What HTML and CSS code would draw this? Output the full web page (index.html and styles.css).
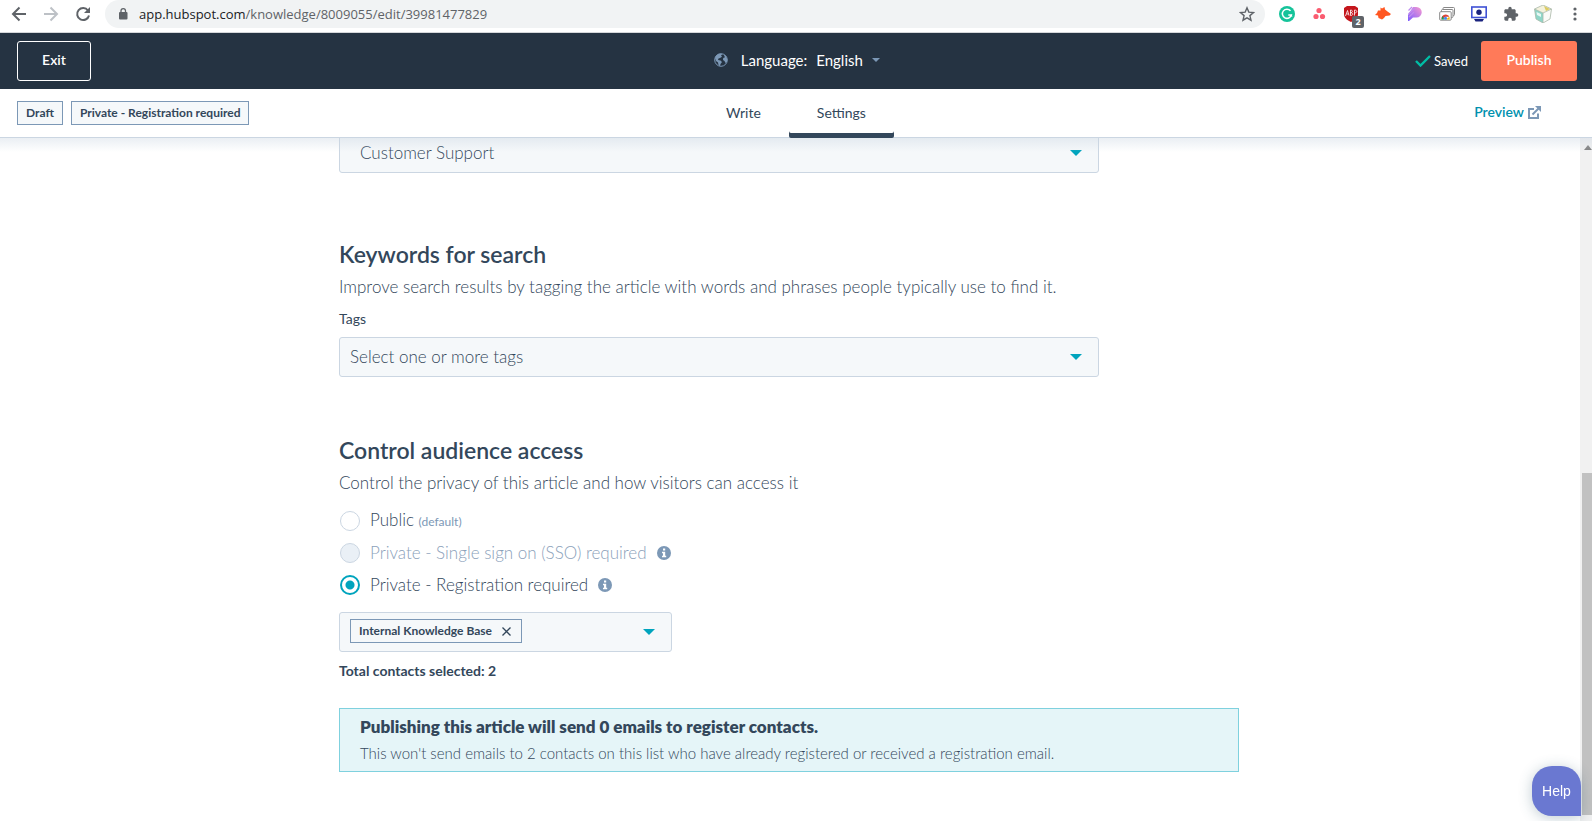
FILE: index.html
```html
<!DOCTYPE html>
<html lang="en">
<head>
<meta charset="utf-8">
<title>Article settings</title>
<link rel="stylesheet" href="styles.css">
</head>
<body>
<div class="browser">
  <button class="chrome-btn" aria-label="Back"><svg width="16" height="16" viewBox="0 0 16 16" fill="none" stroke="#5f6368" stroke-width="2"><path d="M15 8H2.500M8.500 1.500 2 8l6.500 6.500"/></svg></button>
  <button class="chrome-btn" aria-label="Forward"><svg width="16" height="16" viewBox="0 0 16 16" fill="none" stroke="#bdc1c6" stroke-width="2"><path d="M1 8h12.500M7.500 1.500 14 8l-6.500 6.500"/></svg></button>
  <button class="chrome-btn" aria-label="Reload"><svg width="16" height="16" viewBox="0 0 16 16"><path d="M13 4.500A6 6 0 1 0 14 9.500" fill="none" stroke="#5f6368" stroke-width="2"/><path d="M15 1v6H9z" fill="#5f6368"/></svg></button>
  <div class="omnibox">
    <svg width="10" height="14" viewBox="0 0 10 14"><rect x="1" y="5" width="8.500" height="7.500" rx="1" fill="#5f6368"/><path d="M3 5.500V3.800a2.200 2.200 0 0 1 4.500 0v1.700" fill="none" stroke="#5f6368" stroke-width="1.300"/></svg>
    <span class="url"><span class="host">app.hubspot.com</span>/knowledge/8009055/edit/39981477829</span>
    <button class="star" aria-label="Bookmark"><svg width="16" height="16" viewBox="0 0 16 16"><path d="m8 1.800 1.800 4.300 4.700.4-3.600 3.100 1.100 4.600L8 11.800l-4 2.400 1.100-4.600L1.500 6.500l4.700-.4z" fill="none" stroke="#5f6368" stroke-width="1.400"/></svg></button>
  </div>
  <div class="extensions">
    <button class="ext" aria-label="Grammar"><svg width="16" height="16" viewBox="0 0 16 16"><circle cx="8" cy="8" r="8" fill="#15c39a"/><path d="M11.500 4.800A4.600 4.600 0 1 0 12.400 9H9.300" fill="none" stroke="#fff" stroke-width="1.500"/><path d="m11 10.500 1.300-2.300 1.200 2.300" fill="#fff"/></svg></button>
    <button class="ext" aria-label="Tasks"><svg width="16" height="16" viewBox="0 0 16 16" fill="#fa5c70"><circle cx="8" cy="4.500" r="2.600"/><circle cx="5" cy="10.500" r="2.600"/><circle cx="11.500" cy="10.500" r="2.600"/></svg></button>
    <button class="ext" aria-label="Ad blocker"><svg width="16" height="16" viewBox="0 0 16 16"><path d="M4 0h8l3 2v6c0 4-3 6-7 8-4-2-7-4-7-8V2z" fill="#c4161c"/><path d="m2.500 10 2-5.500 1.500 5M3.500 8h2M7.500 4v5.500c3 0 3-2.800 0-2.800 2.500 0 2.500-2.700 0-2.700M11.500 9.500V4c3 0 3 3 0 3" fill="none" stroke="#fff" stroke-width=".8"/></svg><span class="count">2</span></button>
    <button class="ext" aria-label="Fox"><svg width="16" height="16" viewBox="0 0 16 16"><path d="M5.500 1.500 7 2.500 9.500 1l.5 2.500 2.500 2L16 8l-1.500 1.500-4 .5-1.500 2-2 1.500L3.500 12 3 9.500 0 9l2-2 1-2.500h2.500z" fill="#ff5722"/></svg></button>
    <button class="ext" aria-label="Highlighter"><svg width="16" height="16" viewBox="0 0 16 16"><defs><linearGradient id="pg" x1="0" y1="1" x2="1" y2="0"><stop offset="0" stop-color="#7c5cff"/><stop offset="1" stop-color="#f99bd0"/></linearGradient></defs><path d="M6 1h3.500a5 5 0 0 1 0 10.500H6L2 15H1V9z" fill="url(#pg)"/><path d="M1.500 4.500 5 1M1.500 8l6-6M2 11l5-5" stroke="#c08cf0" stroke-width="1.300"/></svg></button>
    <button class="ext" aria-label="Screenshot"><svg width="16" height="16" viewBox="0 0 16 16" fill="#fff"><rect x="4" y="1.500" width="11.500" height="8" rx="1" stroke="#888"/><rect x="2.500" y="3.500" width="11.500" height="8" rx="1" stroke="#888"/><rect x=".7" y="5.700" width="11.500" height="8.500" rx="1" stroke="#888"/><path d="M2.500 13.500a4.200 4.200 0 0 1 4-5c2 0 3.200 1 3.800 2.200H6.500z" fill="#db4437"/><path d="M10.300 10.700a4.500 4.500 0 0 1 .3 2.800H7z" fill="#f4b400"/><path d="M2.500 13.500 3.200 10l2.300 3.500z" fill="#0f9d58"/><circle cx="6.500" cy="12.300" r="1.500" fill="#4285f4"/></svg></button>
    <button class="ext" aria-label="Recorder"><svg width="16" height="16" viewBox="0 0 16 16"><rect x=".8" y="1" width="14.400" height="10.500" fill="#fff" stroke="#3f51d5" stroke-width="1.600"/><circle cx="8" cy="6.200" r="2.700" fill="#1a237e"/><path d="M3 13h10l-1.500 2.500h-7z" fill="#1a237e"/></svg></button>
    <button class="ext" aria-label="Extensions"><svg width="16" height="16" viewBox="0 0 24 24" fill="#5f6368"><path d="M20.500 11H19V7c0-1.100-.9-2-2-2h-4V3.500a2.500 2.500 0 0 0-5 0V5H4c-1.100 0-2 .9-2 2v3.800h1.500a2.700 2.700 0 0 1 0 5.400H2V20c0 1.100.9 2 2 2h3.800v-1.500a2.700 2.700 0 0 1 5.400 0V22H17c1.100 0 2-.9 2-2v-4h1.500a2.500 2.500 0 0 0 0-5z"/></svg></button>
    <button class="ext" aria-label="Profile"><svg width="18" height="18" viewBox="0 0 18 18"><path d="M9 0 17.500 4 9 8 .5 4z" fill="#f4f2dc"/><path d="M.5 4 9 8v10L2 14z" fill="#8fd6c8"/><path d="M17.500 4 9 8v10l7-4z" fill="#fbfbf8"/><path d="M9 0 17.500 4 16 14l-7 4-7-4L.5 4zM.5 4 9 8l8.500-4M9 8v10" fill="none" stroke="#a9b8a8" stroke-width=".8"/><path d="m10 1 6 3-4 2z" fill="#dccb62"/><path d="m2.500 7 4.500 2v3l-4-2z" fill="#e8f8f4"/></svg></button>
    <button class="ext" aria-label="Menu"><svg width="16" height="16" viewBox="0 0 16 16" fill="#5f6368"><circle cx="8" cy="3" r="1.600"/><circle cx="8" cy="8" r="1.600"/><circle cx="8" cy="13" r="1.600"/></svg></button>
  </div>
</div>

<header class="navbar">
  <div class="side"><button class="btn exit">Exit</button></div>
  <div class="language">
    <svg width="14" height="14" viewBox="0 0 14 14"><circle cx="7" cy="7" r="6.300" fill="#253342" stroke="#7c98b6"/><path d="M1 5c.5-2 2-3.500 4-4.200L8.500 1 7 2.500l1 1.200L6 5 4.500 5.500 4 7l2.500.5L8 9l-1.500 2L6 13.200 4.500 12 4 9.500 2 8zM9.500 1.500 12 3l1.200 3-.2 3-1.500 1-1-2L9 7l.2-2 1.800-.8z" fill="#7c98b6"/></svg>
    <label for="lang">Language:</label>
    <select id="lang"><option>English</option></select>
    <svg class="tri" width="8" height="4" viewBox="0 0 8 4"><path d="M0 0h8L4 4z" fill="#7c98b6"/></svg>
  </div>
  <div class="side end">
    <span class="saved"><svg width="16" height="12" viewBox="0 0 16 12"><path d="m1 6 4.500 4.500L15 1" fill="none" stroke="#00bda5" stroke-width="2.400"/></svg>Saved</span>
    <button class="btn publish">Publish</button>
  </div>
</header>

<div class="subbar">
  <div class="side"><span class="tag">Draft</span><span class="tag">Private - Registration required</span></div>
  <nav class="tabs"><a href="#write">Write</a><a href="#settings" class="active">Settings</a></nav>
  <div class="side end"><a class="preview" href="#preview">Preview<svg width="13" height="13" viewBox="0 0 13 13" fill="none" stroke="#7c98b6" stroke-width="2"><path d="M6 3H1v9h9V7.500"/><path d="m4.500 8.500 6-6" /><path d="M7 0h6v6z" fill="#7c98b6" stroke="none"/></svg></a></div>
</div>

<div class="viewport">
  <main class="page">
    <form class="content">
      <div class="field wide scrolled">
        <select class="roomy" aria-label="Category"><option>Customer Support</option></select>
        <svg class="caret" width="12" height="6" viewBox="0 0 12 6"><path d="M0 0h12L6 6z"/></svg>
      </div>

      <section>
        <h2>Keywords for search</h2>
        <p>Improve search results by tagging the article with words and phrases people typically use to find it.</p>
        <label class="field-label" for="tags">Tags</label>
        <div class="field wide">
          <select id="tags"><option>Select one or more tags</option></select>
          <svg class="caret" width="12" height="6" viewBox="0 0 12 6"><path d="M0 0h12L6 6z"/></svg>
        </div>
      </section>

      <section>
        <h2>Control audience access</h2>
        <p>Control the privacy of this article and how visitors can access it</p>
        <div class="radios">
          <label><input type="radio" name="access"><span>Public <small>(default)</small></span></label>
          <label class="off"><input type="radio" name="access" disabled><span>Private - Single sign on (SSO) required</span><svg class="info" width="14" height="14" viewBox="0 0 14 14"><circle cx="7" cy="7" r="7" fill="#7c98b6"/><path d="M6 2.500h2.200v2H6zM5 5.800h3.200v4h1v1.500H5V9.800h1V7.300H5z" fill="#fff"/></svg></label>
          <label><input type="radio" name="access" checked><span>Private - Registration required</span><svg class="info" width="14" height="14" viewBox="0 0 14 14"><circle cx="7" cy="7" r="7" fill="#7c98b6"/><path d="M6 2.500h2.200v2H6zM5 5.800h3.200v4h1v1.500H5V9.800h1V7.300H5z" fill="#fff"/></svg></label>
        </div>
        <div class="field lists">
          <span class="tag">Internal Knowledge Base<button type="button" class="remove" aria-label="Remove"><svg width="9" height="9" viewBox="0 0 9 9"><path d="m.5.5 8 8M8.500.5l-8 8" stroke="#33475b" stroke-width="1.300"/></svg></button></span>
          <svg class="caret" width="12" height="6" viewBox="0 0 12 6"><path d="M0 0h12L6 6z"/></svg>
        </div>
        <div class="total">Total contacts selected: 2</div>
        <div class="alert">
          <strong>Publishing this article will send 0 emails to register contacts.</strong>
          <span>This won't send emails to 2 contacts on this list who have already registered or received a registration email.</span>
        </div>
      </section>
    </form>
  </main>
  <div class="scrollbar">
    <svg width="8" height="5" viewBox="0 0 8 5"><path d="M0 5h8L4 0z" fill="#7f7f7f"/></svg>
    <div class="thumb"></div>
  </div>
</div>
<button class="help">Help</button>
</body>
</html>
```
FILE: styles.css
```css
* { box-sizing: border-box; }
body {
  margin: 0;
  height: 100vh;
  display: flex;
  flex-direction: column;
  overflow: hidden;
  background: #fff;
  color: #33475b;
  font: 14px/20px Lato, "Open Sans", sans-serif;
}
button, select, input { font: inherit; color: inherit; margin: 0; }
button { border: 0; background: none; padding: 0; cursor: pointer; }
select { appearance: none; border: 0; background: none; padding: 0; outline: 0; }
a { color: inherit; text-decoration: none; }
svg { display: block; flex: none; }

.browser {
  display: flex;
  height: 33px;
  padding: 0 9px 4px 11px;
  gap: 16px;
  align-items: center;
  border-bottom: 1px solid #d5d7da;
  font: 13px/20px "Open Sans", "Noto Sans", sans-serif;
}
.omnibox {
  flex: 1;
  display: flex;
  align-items: center;
  height: 28px;
  padding: 0 10px 0 13px;
  gap: 11px;
  margin-left: -2px;
  border-radius: 14px;
  background: #f1f3f4;
}
.url { flex: 1; color: #5f6368; }
.host { color: #202124; }
.extensions { display: flex; gap: 16px; margin-left: -2px; }
.ext { position: relative; width: 16px; height: 16px; display: flex; align-items: center; justify-content: center; }
.count {
  position: absolute;
  left: 9px;
  top: 10px;
  width: 12px;
  height: 12px;
  border-radius: 2px;
  background: #5f6368;
  color: #fff;
  font: bold 9px/12px "Open Sans", sans-serif;
}

.navbar, .subbar { display: flex; align-items: center; flex: none; }
.navbar { height: 56px; padding: 0 15px 0 17px; background: #253342; color: #fff; }
.side { flex: 1; display: flex; align-items: center; gap: 8px; }
.end { justify-content: flex-end; }
.btn { height: 40px; padding-bottom: 2px; border-radius: 3px; font-weight: 600; }
.exit { width: 74px; border: 1px solid #fff; }
.publish { width: 96px; background: #ff7a59; }
.language { display: flex; align-items: center; gap: 9px; padding-bottom: 3px; font-size: 15px; }
.language label { margin-left: 4px; }
.saved { display: flex; align-items: center; gap: 3px; margin-right: 5px; font-size: 13px; }

.subbar { height: 49px; padding: 0 17px; border-bottom: 1px solid #cbd6e2; }
.tag {
  display: inline-flex;
  align-items: center;
  height: 24px;
  padding: 0 8px;
  border: 1px solid #7c98b6;
  background: #f5f8fa;
  font-size: 12px;
  font-weight: 700;
}
.tabs { display: flex; align-self: stretch; }
.tabs a { display: flex; align-items: center; padding: 0 28px 2px; height: 49px; }
.tabs .active { box-shadow: inset 0 -5px #33475b; border-radius: 2px; }
.preview { display: flex; align-items: center; gap: 4px; margin-right: 34px; padding-bottom: 2px; color: #0091ae; font-weight: 600; }

.viewport { flex: 1; display: flex; min-height: 0; position: relative; }
.viewport::before {
  content: "";
  position: absolute;
  z-index: 1;
  inset: 0 0 auto;
  height: 14px;
  background: linear-gradient(rgba(203, 214, 226, .4), rgba(203, 214, 226, 0));
  pointer-events: none;
}
.page { flex: 1; overflow: hidden; padding: 0 16px 0 14px; }
.content { max-width: 900px; margin: 0 auto; font-size: 17px; font-weight: 300; line-height: 24px; }
.scrolled { margin-top: -5px; }
.field {
  position: relative;
  display: flex;
  align-items: center;
  height: 40px;
  border: 1px solid #cbd6e2;
  border-radius: 3px;
  background: #f5f8fa;
}
.wide { max-width: 760px; }
.field select { width: 100%; height: 38px; padding: 0 40px 0 10px; }
.field .roomy { padding-left: 20px; }
.caret { position: absolute; right: 16px; fill: #00a4bd; pointer-events: none; }

section { margin-top: 66px; }
section + section { margin-top: 58px; }
h2 { margin: 0; font-size: 23px; line-height: 30px; font-weight: 600; }
p { margin: 6px 0 10px; }
.field-label { display: block; font-size: 14px; font-weight: 400; line-height: 20px; margin-bottom: 8px; }
.radios label { display: flex; align-items: center; height: 32px; }
.radios input {
  appearance: none;
  width: 20px;
  height: 20px;
  margin: 0 10px 0 1px;
  border: 1px solid #cbd6e2;
  border-radius: 50%;
}
.radios input:disabled { background: #eaf0f6; }
.radios input:checked { border: 2px solid #00a4bd; background: radial-gradient(circle, #00a4bd 4px, transparent 5px); }
.radios small { font-size: 12px; font-weight: 400; color: #7c98b6; }
.off span { color: #8ba1ba; }
.info { margin-left: 10px; }
.lists { max-width: 333px; margin-top: 11px; padding: 0 10px; }
.lists .tag { margin-bottom: 2px; }
.remove { margin-left: 10px; padding-right: 2px; }
.total { margin-top: 9px; font-size: 14px; line-height: 20px; font-weight: 700; }
.alert {
  display: flex;
  flex-direction: column;
  gap: 2px;
  margin-top: 27px;
  padding: 6px 20px;
  border: 1px solid #7fd1de;
  background: #e5f5f8;
  font-size: 15px;
}
.alert strong { font-size: 17px; font-weight: 800; }

.scrollbar { width: 12px; padding: 7px 0 6px 2px; background: #f1f1f1; display: flex; flex-direction: column; align-items: flex-end; justify-content: space-between; }
.thumb { width: 10px; height: 51%; background: #c1c1c1; }
.help {
  position: fixed;
  right: 11px;
  bottom: 5px;
  width: 49px;
  height: 50px;
  border-radius: 20px 20px 0 20px;
  background: #6a78d1;
  color: #fff;
  font: 14px/20px "Liberation Sans", Arial, sans-serif;
  box-shadow: 0 2px 14px rgba(45, 90, 110, .3);
}
```
